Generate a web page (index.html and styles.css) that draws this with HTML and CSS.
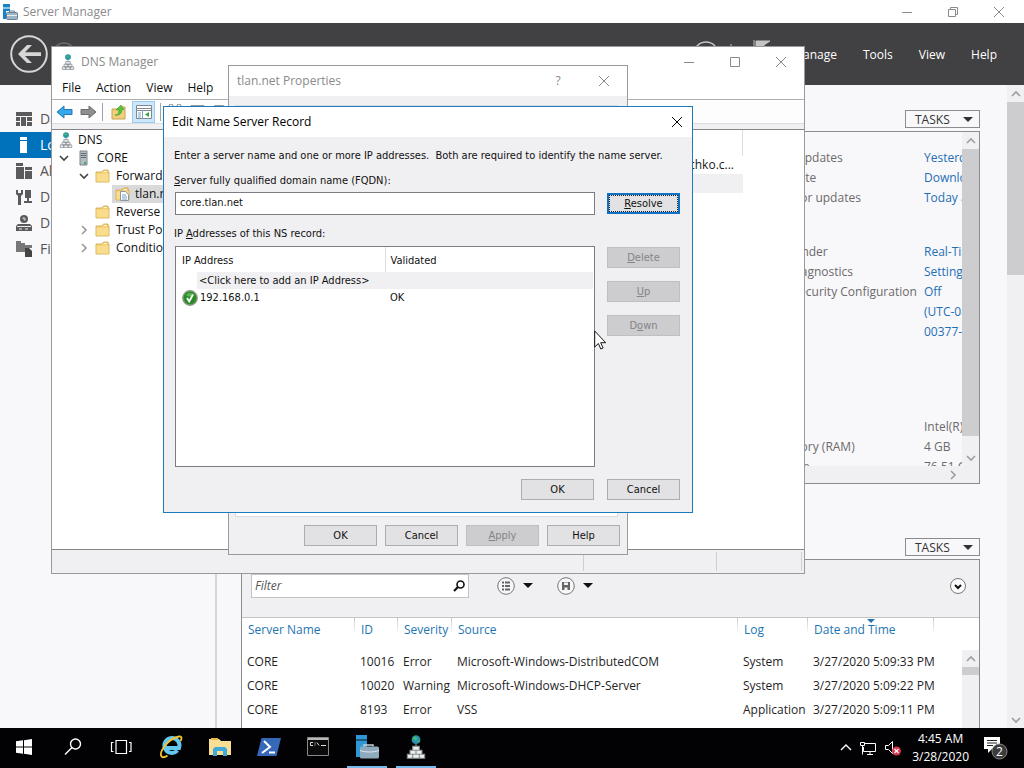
FILE: index.html
```html
<!DOCTYPE html>
<html lang="en">
<head>
<meta charset="utf-8">
<title>Server Manager</title>
<link rel="stylesheet" href="styles.css">
</head>
<body>
<svg class="defs" aria-hidden="true">
  <symbol id="x" viewBox="0 0 12 12"><path d="M1 1l10 10M11 1L1 11" fill="none" stroke="currentColor"/></symbol>
  <symbol id="min" viewBox="0 0 12 12"><path d="M1 6.500h10" fill="none" stroke="currentColor"/></symbol>
  <symbol id="down" viewBox="0 0 10 10"><path d="M1 3l4 4 4-4" fill="none" stroke="currentColor" stroke-width="1.600"/></symbol>
  <symbol id="tri" viewBox="0 0 10 6"><path d="M0 0h10L5 5z" fill="currentColor"/></symbol>
  <symbol id="dns" viewBox="0 0 14 18">
    <circle cx="7" cy="3.500" r="3.300" fill="#2e8fae"/><path d="M4.500 2.500l2-1.500 1.500 1.500-1 2zM8 4.500l2-.5-.8 2z" fill="#3fc06a"/>
    <path d="M7 7v2" fill="none" stroke="#8a8f94"/>
    <path d="M4.500 8.500h5v3h-5zM2.500 11.500h4.500v3H2.500zM7 11.500h4.500v3H7zM.5 14.500h4v3h-4zM4.500 14.500h5v3h-5zM9.500 14.500h4v3h-4z" fill="#eceef0" stroke="#858a90" stroke-width=".8"/>
  </symbol>
  <symbol id="folder" viewBox="0 0 15 14">
    <path d="M1 13V3h6l1.500-2H13v2h1v10z" fill="#f2cf73" stroke="#d2a544" stroke-width=".8"/><path d="M1.500 4.500h12v8h-12z" fill="#f9dd8d"/><path d="M8.500 2.500H12" stroke="#fff7dc"/>
  </symbol>
  <symbol id="srv" viewBox="0 0 24 24">
    <path d="M1 0h11v22H1z" fill="#2f97d6"/><path d="M1 5h11" stroke="#000" stroke-width=".8"/>
    <path d="M9 11.500V10h9v1.500" fill="none" stroke="#c8d3dd" stroke-width="1.500"/>
    <rect x="5" y="11.500" width="19" height="12" rx="1.500" fill="#8fa9bd"/><path d="M5 15.500c6 2 13 2 19 0" fill="none" stroke="#dfe8ef"/>
  </symbol>
</svg>
<div class="screen">
  <main class="sm">
    <header class="sm-title">
      <svg class="i16" viewBox="0 0 16 16"><path d="M1 0h7v15H1z" fill="#1883c4"/><path d="M1 4h7" stroke="#fff"/><path d="M4 7h12v9H4z" fill="#fff"/><path d="M7.500 8.500V7h5v1.500" fill="none" stroke="#667f94"/><rect x="4.500" y="8.500" width="11" height="7" rx="1" fill="#9eb3c3" stroke="#667f94"/><path d="M5 11.500h10" stroke="#e8eef3"/></svg>
      <h1 class="caption">Server Manager</h1>
      <div class="winbtns">
        <button aria-label="Minimize"><svg class="i12"><use href="#min"/></svg></button>
        <button aria-label="Restore"><svg class="i12" viewBox="0 0 12 12"><path d="M1.500 3.500h7v7h-7zM3.500 3V1.500h7v7H9" fill="none" stroke="currentColor"/></svg></button>
        <button aria-label="Close"><svg class="i12"><use href="#x"/></svg></button>
      </div>
    </header>
    <nav class="sm-bar">
      <button class="round" aria-label="Back"><svg viewBox="0 0 38 38"><circle cx="19" cy="19" r="17.800" fill="none" stroke="#d6d6d6" stroke-width="2"/><path d="M8 19l9-9h5l-7 7.300h16v3.600H15l7 7.100h-5z" fill="#d6d6d6"/></svg></button>
      <svg class="fwd" viewBox="0 0 24 24"><circle cx="12" cy="12" r="11" fill="none" stroke="#6a6a6a" stroke-width="1.500"/></svg>
      <svg class="refresh" viewBox="0 0 80 28"><circle cx="13" cy="14" r="12" fill="none" stroke="#c4c4c4" stroke-width="1.500"/><path d="M38 4v20" stroke="#bbb"/><path d="M61 0v26M63 1h14l-6 4v4h-8z" fill="#c4c4c4" stroke="#c4c4c4"/></svg>
      <div class="sm-menu"><button>Manage</button><button>Tools</button><button>View</button><button>Help</button></div>
    </nav>
    <div class="sm-body">
      <aside class="side">
        <a href="#" class="nav"><svg viewBox="0 0 16 16"><path d="M0 1h16v4H0zM0 6h4v4H0zM5 6h5v9H5zM11 6h5v4h-5zM0 11h4v4H0zM11 11h5v4h-5z" fill="#5b5b5d"/></svg>Dashboard</a>
        <a href="#" class="nav on"><svg viewBox="0 0 16 16"><path d="M4 0h7v3H4zM4 4h7v12H4z" fill="#fff"/></svg>Local Server</a>
        <a href="#" class="nav"><svg viewBox="0 0 16 16"><path d="M0 0h7v3H0zM0 4h8v12H0zM9 4h7v3H9zM9 8h7v8H9z" fill="#5b5b5d"/></svg>All Servers</a>
        <a href="#" class="nav"><svg viewBox="0 0 16 16"><path d="M0 1v4l2 2v9h3V7l2-2V1H5v3H2V1zM9 1h6v8H9zM11 9h2v3h3v2H8v-2h3z" fill="#5b5b5d"/></svg>DHCP</a>
        <a href="#" class="nav"><svg viewBox="0 0 16 16"><circle cx="8" cy="4" r="4" fill="#5b5b5d"/><path d="M6 3l2-1 2 2-1 2z" fill="#bbb"/><path d="M2 9h12l2 2v5H0v-5z" fill="#5b5b5d"/><path d="M1 11.500h14M3 14h3M9 14h3" stroke="#eee"/></svg>DNS</a>
        <a href="#" class="nav"><svg viewBox="0 0 16 16"><path d="M0 2V0h5v2h4v9H0zM9 4h7v3H9z" fill="#77777a"/><path d="M9 7h4l3 3v6H9z" fill="#444"/></svg>File and Storage Services</a>
      </aside>
      <section class="content">
        <div class="sec-head"><button class="tasks">TASKS<svg><use href="#tri"/></svg></button></div>
        <div class="props">
          <div class="props-view">
            <dl class="plist">
              <dt>Last installed updates</dt><dd><a href="#">Yesterday</a></dd>
              <dt>Windows Update</dt><dd><a href="#">Download</a></dd>
              <dt>Last checked for updates</dt><dd><a href="#">Today at</a></dd>
            </dl>
            <dl class="plist">
              <dt>Windows Defender</dt><dd><a href="#">Real-Time</a></dd>
              <dt>Feedback &amp; Diagnostics</dt><dd><a href="#">Settings</a></dd>
              <dt>IE Enhanced Security Configuration</dt><dd><a href="#">Off</a></dd>
              <dt>Time zone</dt><dd><a href="#">(UTC-08:00)</a></dd>
              <dt>Product ID</dt><dd><a href="#">00377-1</a></dd>
            </dl>
            <dl class="plist hw">
              <dt>Processors</dt><dd>Intel(R)</dd>
              <dt>Installed memory (RAM)</dt><dd>4 GB</dd>
              <dt>Total disk space</dt><dd>76.51 GB</dd>
            </dl>
          </div>
          <div class="vbar"><span class="cap"><svg class="up"><use href="#down"/></svg></span><span class="thumb"></span><span class="cap low"><svg><use href="#down"/></svg></span></div>
          <div class="hbar"><svg class="right"><use href="#down"/></svg></div>
        </div>
        <div class="sec-head second"><button class="tasks">TASKS<svg><use href="#tri"/></svg></button></div>
        <div class="events">
          <div class="ev-tools">
            <label class="filter"><input type="text" placeholder="Filter" aria-label="Filter"><svg viewBox="0 0 12 12"><circle cx="7.500" cy="4.500" r="3.500" fill="none" stroke="#111" stroke-width="1.600"/><path d="M5 7L1 11" stroke="#111" stroke-width="2.200"/></svg></label>
            <button class="opt" aria-label="Queries"><svg class="i18" viewBox="0 0 18 18"><circle cx="9" cy="9" r="8.300" fill="#f7f6f8" stroke="#777"/><path d="M5 5.500h2M5 9h2M5 12.500h2M8 5.500h5M8 9h5M8 12.500h5" stroke="#666" stroke-width="2"/></svg><svg class="tri"><use href="#tri"/></svg></button>
            <button class="opt" aria-label="Save"><svg class="i18" viewBox="0 0 18 18"><circle cx="9" cy="9" r="8.300" fill="#f7f6f8" stroke="#777"/><path d="M5 5h8v8H5z" fill="#666"/><path d="M7 5.500h4v2.500H7zM7.500 10.500h3V13h-3z" fill="#f3f3f3"/></svg><svg class="tri"><use href="#tri"/></svg></button>
            <button class="expand" aria-label="Expand"><svg class="i18" viewBox="0 0 18 18"><circle cx="9" cy="9" r="7.500" fill="#fbfbfc" stroke="#777"/><path d="M6 8l3 3 3-3" fill="none" stroke="#111" stroke-width="2"/></svg></button>
          </div>
          <div class="ev-grid">
            <table class="ev">
              <colgroup><col class="c1"><col class="c2"><col class="c3"><col class="c4"><col class="c5"><col class="c6"><col></colgroup>
              <thead><tr><th>Server Name</th><th>ID</th><th>Severity</th><th>Source</th><th>Log</th><th class="sorted">Date and Time<svg><use href="#tri"/></svg></th><th></th></tr></thead>
              <tbody>
                <tr><td>CORE</td><td>10016</td><td>Error</td><td>Microsoft-Windows-DistributedCOM</td><td>System</td><td>3/27/2020 5:09:33 PM</td><td></td></tr>
                <tr><td>CORE</td><td>10020</td><td>Warning</td><td>Microsoft-Windows-DHCP-Server</td><td>System</td><td>3/27/2020 5:09:22 PM</td><td></td></tr>
                <tr><td>CORE</td><td>8193</td><td>Error</td><td>VSS</td><td>Application</td><td>3/27/2020 5:09:11 PM</td><td></td></tr>
              </tbody>
            </table>
            <div class="vbar ev-scroll"><span class="cap"><svg class="up"><use href="#down"/></svg></span><span class="thumb short"></span></div>
          </div>
        </div>
      </section>
      <div class="pagebar"><span class="cap"><svg class="up"><use href="#down"/></svg></span><span class="thumb page"></span><span class="cap last"><svg><use href="#down"/></svg></span></div>
    </div>
  </main>

  <section class="win dns">
    <header class="dns-title"><svg class="dnsic"><use href="#dns"/></svg><h2 class="caption">DNS Manager</h2>
      <div class="winbtns"><button aria-label="Minimize"><svg class="i12"><use href="#min"/></svg></button><button aria-label="Maximize"><svg class="i12" viewBox="0 0 12 12"><path d="M1.500 1.500h9v9h-9z" fill="none" stroke="currentColor"/></svg></button><button aria-label="Close"><svg class="i12"><use href="#x"/></svg></button></div>
    </header>
    <nav class="dns-menu"><button>File</button><button>Action</button><button>View</button><button>Help</button></nav>
    <div class="dns-tools">
      <button aria-label="Back"><svg viewBox="0 0 18 16"><path d="M1 8l7-6v3.500h8v5H8V14z" fill="#35a8e8" stroke="#2379b8"/></svg></button>
      <button aria-label="Forward"><svg viewBox="0 0 18 16"><path d="M17 8l-7-6v3.500H2v5h8V14z" fill="#8f8f8f" stroke="#6d6d6d"/></svg></button>
      <span class="rule"></span>
      <button aria-label="Up"><svg viewBox="0 0 18 16"><path d="M2 15V5h6l2-2h5v12z" fill="#f0cf7c" stroke="#c9a24c"/><path d="M5 11c3 0 4-2 4-5H6l5-5 3 4.500h-2c0 4-3 6.500-7 5.500z" fill="#55c43a" stroke="#3d9a28" stroke-width=".6"/></svg></button>
      <button class="on" aria-label="Console tree"><svg viewBox="0 0 18 16"><path d="M1.500 1.500h15v13h-15z" fill="#fff" stroke="#808890"/><path d="M1 4.500h16M1 6.500h16" stroke="#808890"/><path d="M7.500 6v9M3 9h3M3 11h3M3 13h3" stroke="#80a0c0"/><path d="M14 8v5l-4-2.500z" fill="#33a933"/></svg></button>
      <span class="rule"></span>
      <button aria-label="Cut and properties" class="wide"><svg viewBox="0 0 64 16"><circle cx="4" cy="2" r="2" fill="none" stroke="#888"/><circle cx="12" cy="2" r="2" fill="none" stroke="#888"/><path d="M24 1.500h13V8H24zM47.500 1.500h9V8h-9z" fill="#fff" stroke="#999"/></svg></button>
    </div>
    <div class="panes">
      <ul class="tree">
        <li class="l0"><svg class="dnsic"><use href="#dns"/></svg><span>DNS</span></li>
        <li class="l1"><svg class="chev"><use href="#down"/></svg><svg class="tower" viewBox="0 0 12 16"><path d="M3 1h7v14H3z" fill="#b4bcc3" stroke="#7d868e"/><path d="M4 3.500h5M4 5.500h5M4 7.500h5" stroke="#5f6972"/><path d="M7 12h2v2H7z" fill="#35b54a"/></svg><span>CORE</span></li>
        <li class="l2"><svg class="chev"><use href="#down"/></svg><svg class="fold"><use href="#folder"/></svg><span>Forward Lookup Zones</span></li>
        <li class="l3 sel"><svg class="fold" viewBox="0 0 15 14"><use href="#folder"/><path d="M5.500 4.500h5l3 3v6h-8z" fill="#fff" stroke="#8a98a5"/><path d="M7 8h4M7 10h5M7 12h5" stroke="#5588b8" stroke-width=".8"/></svg><span>tlan.net</span></li>
        <li class="l2"><i class="chev"></i><svg class="fold"><use href="#folder"/></svg><span>Reverse Lookup Zones</span></li>
        <li class="l2"><svg class="chev shut"><use href="#down"/></svg><svg class="fold"><use href="#folder"/></svg><span>Trust Points</span></li>
        <li class="l2"><svg class="chev shut"><use href="#down"/></svg><svg class="fold"><use href="#folder"/></svg><span>Conditional Forwarders</span></li>
      </ul>
      <div class="records"><div class="rec-head"></div><div class="rec">chko.c...</div><div class="rec alt"></div></div>
    </div>
    <footer class="status"><span></span><span class="s2"></span><span class="s3"></span></footer>
  </section>

  <section class="win sheet">
    <header class="sheet-title"><h2 class="caption">tlan.net Properties</h2><div class="winbtns"><button aria-label="Help">?</button><button aria-label="Close"><svg class="i12"><use href="#x"/></svg></button></div></header>
    <div class="sheet-body"><div class="tabpage"></div>
      <div class="row"><button class="btn">OK</button><button class="btn">Cancel</button><button class="btn" disabled><u>A</u>pply</button><button class="btn">Help</button></div>
    </div>
  </section>

  <section class="win dialog" role="dialog" aria-labelledby="dlg">
    <header class="dlg-title"><h2 class="caption" id="dlg">Edit Name Server Record</h2><div class="winbtns"><button aria-label="Close"><svg class="i12"><use href="#x"/></svg></button></div></header>
    <div class="dlg-body">
      <p class="intro">Enter a server name and one or more IP addresses.&nbsp; Both are required to identify the name server.</p>
      <label class="lab" for="fqdn"><u>S</u>erver fully qualified domain name (FQDN):</label>
      <div class="pair"><input class="fqdn" id="fqdn" type="text" value="core.tlan.net"><button class="btn primary"><span><u>R</u>esolve</span></button></div>
      <p class="lab ips">IP <u>A</u>ddresses of this NS record:</p>
      <div class="pair grow">
        <div class="list">
          <table>
            <thead><tr><th class="addr">IP Address</th><th>Validated</th></tr></thead>
            <tbody>
              <tr class="new"><td colspan="2"><span>&lt;Click here to add an IP Address&gt;</span></td></tr>
              <tr class="ip"><td><div><svg viewBox="0 0 16 16"><circle cx="8" cy="8" r="7.200" fill="#2a8a27" stroke="#8b9a88" stroke-width="1.400"/><path d="M4 5a5 5 0 0 1 8 0c-2 2-6 2-8 0z" fill="#5db653"/><path d="M5 8l2.200 3.500L11 4.500" fill="none" stroke="#fff" stroke-width="1.800"/></svg>192.168.0.1</div></td><td>OK</td></tr>
            </tbody>
          </table>
        </div>
        <div class="stack"><button class="btn" disabled><u>D</u>elete</button><button class="btn" disabled><u>U</u>p</button><button class="btn" disabled>D<u>o</u>wn</button></div>
      </div>
      <div class="row finish"><button class="btn">OK</button><button class="btn">Cancel</button></div>
    </div>
  </section>

  <footer class="taskbar">
    <button aria-label="Start"><svg viewBox="0 0 24 24"><path d="M4 6.300l7-1V11.500H4zM12 5.200l8-1.200v7.500h-8zM4 12.500h7v6.200l-7-1zM12 12.500h8V20l-8-1.200z" fill="#fff"/></svg></button>
    <button aria-label="Search"><svg viewBox="0 0 24 24"><circle cx="14.500" cy="9" r="5" fill="none" stroke="#fff" stroke-width="1.400"/><path d="M11 12.500l-7 7" stroke="#fff" stroke-width="1.400"/></svg></button>
    <button aria-label="Task view"><svg viewBox="0 0 24 24"><path d="M6 5.500h10.500v13H6zM3.500 7.500h-2v9h2M19 7.500h2v9h-2" fill="none" stroke="#fff" stroke-width="1.200"/></svg></button>
    <button aria-label="Internet Explorer"><svg viewBox="0 0 24 24"><path d="M18.500 15.500A7.500 7.500 0 1 1 20 13H7.500" fill="none" stroke="#62c8f2" stroke-width="4"/><path d="M3 22C-1 18 8 4 20 1.500c3-.5 3 2 1.500 4.500M3 22c1.500.6 3.500 0 5.500-1.500" fill="none" stroke="#f4c430" stroke-width="1.800"/></svg></button>
    <button aria-label="File Explorer"><svg viewBox="0 0 24 24"><path d="M1 20V4h10l2 2h10v14z" fill="#f9df94"/><path d="M3 3h7v2H3z" fill="#e8b84a"/><path d="M5 21v-7l2-2h10l2 2v7h-4v-5H9v5z" fill="#3fa9dc"/></svg></button>
    <button aria-label="PowerShell"><svg viewBox="0 0 24 24"><path d="M4.500 3H24l-4.500 18H0z" fill="#3568b8"/><path d="M7 6l6 6-8 6M12 17.500h6" fill="none" stroke="#fff" stroke-width="2"/></svg></button>
    <button aria-label="Command Prompt"><svg viewBox="0 0 24 24"><path d="M1.500 2.500h21v18h-21z" fill="#0b0b0b" stroke="#888"/><path d="M2 4h20" stroke="#b8b8b8" stroke-width="2"/><path d="M7 7.500H4.500v3H7M9 7.500v1M9 9.500v1M11 7.500l2 3M15 10.500h5" fill="none" stroke="#ddd"/></svg></button>
    <button aria-label="Server Manager" class="run"><svg viewBox="0 0 24 24"><use href="#srv"/></svg></button>
    <button aria-label="DNS Manager" class="run"><svg viewBox="0 0 24 24"><use href="#dns" width="24" height="24"/></svg></button>
    <div class="tray">
      <svg class="up" viewBox="0 0 12 12"><path d="M1 4l5 5 5-5" fill="none" stroke="#fff" stroke-width="1.400"/></svg>
      <svg viewBox="0 0 18 16"><path d="M5 3.500h11.500v8H4.500V7M8 14.500h6M11 11.500v3M1.500 2.500h4v3h-4zM3.500 5.500v9" fill="none" stroke="#fff"/></svg>
      <svg viewBox="0 0 18 16"><path d="M1.500 5.500h3l4-4v12l-4-4h-3z" fill="none" stroke="#fff"/><circle cx="12.500" cy="11" r="4.500" fill="#d8344a"/><path d="M10.500 9l4 4M14.500 9l-4 4" stroke="#fff" stroke-width="1.300"/></svg>
      <time class="clock">4:45 AM<br>3/28/2020</time>
      <svg class="note" viewBox="0 0 24 24"><path d="M0 1h16v12H8l-4 4v-4H0z" fill="#fff"/><path d="M3 4.500h10M3 7h10M3 9.500h6" stroke="#222"/><circle cx="15.500" cy="15.500" r="7.500" fill="#3b3b3b" stroke="#888"/><text x="15.500" y="20" text-anchor="middle" fill="#fff" class="badge">2</text></svg>
    </div>
  </footer>
  <svg class="cursor" viewBox="0 0 12 20"><path d="M.7 1v16l3.700-3.500 2.400 5.500 2.300-1-2.400-5.300h5z" fill="#fff" stroke="#000" stroke-width=".9"/></svg>
</div>
</body>
</html>
```
FILE: styles.css
```css
* { box-sizing: border-box; }
body { margin: 0; font: 12px/16px "Open Sans", "Noto Sans", sans-serif; color: #1a1a1a; }
button, input { font: inherit; color: inherit; margin: 0; }
button { padding: 0; border: 0; background: none; }
h1, h2, p, dl, dd, ul { margin: 0; padding: 0; }
a { color: #1e6fb5; text-decoration: none; }
svg { display: block; flex: none; }
.defs { position: absolute; width: 0; height: 0; }
.screen { position: relative; height: 100vh; display: flex; flex-direction: column; overflow: hidden; background: #f8f7fa; }
.caption { font-size: 12px; font-weight: 400; flex: 1; white-space: nowrap; }
.i12 { width: 12px; height: 12px; }
.i16 { width: 16px; height: 16px; }
.i18 { width: 18px; height: 18px; }
.winbtns { display: flex; }
.winbtns button { width: 46px; display: flex; justify-content: center; align-items: center; }
.up { transform: rotate(180deg); }
.right { transform: rotate(-90deg); }

/* Server Manager */
.sm { flex: 1; min-height: 0; display: flex; flex-direction: column; }
.sm-title { height: 23px; display: flex; align-items: center; gap: 5px; padding: 0 2px; background: #fff; color: #8a8a8a; }
.sm-bar { height: 62px; display: flex; align-items: center; padding: 0 16px 0 10px; background: #414042; color: #fff; }
.round, .round svg { width: 38px; height: 38px; }
.fwd { width: 24px; height: 24px; margin-left: 4px; }
.refresh { width: 80px; height: 28px; margin-left: auto; }
.sm-menu { display: flex; gap: 4px; margin-left: 8px; padding-top: 2px; }
.sm-menu button { padding: 0 11px; }
.sm-body { flex: 1; min-height: 0; display: flex; }
.side { width: 217px; padding-top: 21px; border-right: 2px solid #d4d3d6; }
.nav { display: flex; align-items: center; gap: 8px; height: 26px; padding-left: 16px; font-size: 14px; color: #555; white-space: nowrap; }
.nav svg { width: 16px; height: 16px; }
.nav.on { background: #0072bc; color: #fff; }
.content { flex: 1; min-width: 0; display: flex; flex-direction: column; padding: 25px 27px 0 24px; }
.sec-head { display: flex; justify-content: flex-end; padding-bottom: 3px; }
.second { margin-top: 54px; }
.tasks { display: flex; align-items: center; justify-content: space-between; width: 75px; height: 18px; padding: 1px 6px 0 9px; border: 1px solid #8c8b8e; color: #333; }
.tasks svg { width: 10px; height: 6px; }
.props { height: 353px; display: grid; grid-template: 1fr 17px / 1fr 17px; border: 1px solid #8c8b8e; }
.props-view { overflow: hidden; padding: 16px 0 0 479px; color: #6b6b6b; }
.plist { display: grid; grid-template-columns: 203px 200px; grid-auto-rows: 20px; line-height: 20px; white-space: nowrap; margin-bottom: 34px; }
.hw { margin-top: 75px; margin-bottom: 0; }
.vbar, .pagebar { display: flex; flex-direction: column; background: #f0eff1; color: #8a8a8a; }
.cap { height: 17px; display: flex; align-items: center; justify-content: center; }
.cap svg, .right { width: 10px; height: 10px; opacity: .8; }
.thumb { flex: 1; background: #cdccce; }
.cap.low { height: 30px; align-items: flex-end; padding-bottom: 3px; }
.hbar { grid-column: 1 / 3; display: flex; align-items: center; justify-content: flex-end; padding-right: 21px; background: #f0eff1; color: #8a8a8a; }
.pagebar { width: 17px; }
.thumb.page { flex: none; height: 173px; }
.cap.last { margin-top: auto; }
.events { flex: 1; min-height: 0; display: flex; flex-direction: column; border: 1px solid #8c8b8e; border-bottom: 0; background: #fff; }
.ev-tools { height: 58px; flex: none; display: flex; align-items: flex-start; padding: 14px 12px 0 9px; background: #f0eff1; border-bottom: 1px solid #c4c3c6; }
.filter { display: flex; align-items: center; width: 218px; height: 24px; padding: 0 3px; background: #fff; border: 1px solid #c4c3c6; }
.filter input { flex: 1; min-width: 0; border: 0; padding: 0; background: none; font-style: italic; outline: none; }
.filter input::placeholder { color: #555; opacity: 1; }
.filter svg { width: 12px; height: 12px; }
.opt { display: flex; align-items: center; gap: 8px; width: 40px; height: 24px; margin-left: 28px; }
.opt + .opt { margin-left: 20px; }
.tri { width: 10px; height: 6px; color: #111; }
.expand { margin: 3px 0 0 auto; }
.ev-grid { flex: 1; min-height: 0; display: flex; position: relative; }
.ev { flex: 1; width: 100%; align-self: flex-start; border-collapse: collapse; table-layout: fixed; white-space: nowrap; }
.ev th { height: 32px; padding: 0 0 8px 6px; font-weight: 400; text-align: left; color: #1e75b3; background: linear-gradient(#c9c8cb, #fff) right top / 1px 16px no-repeat; }
.ev th:last-child { background: none; }
.ev td { height: 24px; padding: 0 0 0 5px; color: #1f1f1f; }
.sorted { position: relative; }
.sorted svg { position: absolute; top: 1px; left: 59px; width: 8px; height: 5px; }
.c1 { width: 113px; } .c2 { width: 43px; } .c3 { width: 54px; } .c4 { width: 286px; } .c5 { width: 70px; } .c6 { width: 126px; }
.ev-scroll { width: 17px; margin-top: 32px; }
.thumb.short { flex: none; height: 8px; }

/* Windows on the desktop */
.win { position: absolute; display: flex; flex-direction: column; border: 1px solid #9a999c; background: #f0eff1; }
.dns { left: 51px; top: 46px; width: 754px; height: 528px; }
.dns-title { height: 29px; display: flex; align-items: center; gap: 6px; padding-left: 9px; background: #fff; color: #8a8a8a; }
.dnsic { width: 14px; height: 16px; }
.dns-menu { height: 24px; display: flex; align-items: center; gap: 15px; padding-left: 10px; background: #fff; border-bottom: 1px solid #b0afb2; color: #111; }
.dns-tools { height: 24px; display: flex; align-items: center; padding-left: 3px; gap: 4px; background: #fdfdfe; border-bottom: 1px solid #dcdbde; }
.dns-tools button { width: 19px; height: 22px; display: flex; align-items: center; justify-content: center; }
.dns-tools svg { width: 18px; height: 16px; }
.dns-tools .on { width: 23px; background: #cce6fa; border: 1px solid #99cdf3; }
.dns-tools .wide, .dns-tools .wide svg { width: 64px; }
.rule { width: 1px; height: 18px; margin: 0 2px 0 1px; background: #a3a2a5; }
.panes { flex: 1; min-height: 0; margin-top: 5px; display: flex; background: #fff; border-top: 1px solid #858487; border-bottom: 1px solid #858487; }
.tree { width: 240px; list-style: none; color: #111; padding-top: 1px; }
.tree li { display: flex; align-items: center; gap: 5px; height: 18px; white-space: nowrap; }
.tree .l0 { padding-left: 7px; }
.tree .l1 { padding-left: 7px; gap: 6px; }
.tree .l2 { padding-left: 27px; gap: 6px; }
.tree .l3 { margin-left: 60px; padding-left: 3px; }
.sel { background: #d9d9d9; }
.chev { width: 10px; height: 10px; color: #444; }
.chev.shut { transform: rotate(-90deg); color: #999; }
.tower { width: 16px; height: 16px; }
.fold { width: 15px; height: 14px; }
.records { flex: 1; margin-right: 61px; text-align: right; }
.rec-head { height: 26px; border-right: 1px solid #dcdbde; }
.rec { height: 18px; line-height: 18px; padding-right: 9px; }
.rec.alt { height: 19px; background: #f0eff1; }
.status { height: 23px; display: flex; padding: 2px 2px 2px 0; }
.status span { flex: 1; border-right: 1px solid #cfced1; }
.status .s2 { flex: none; width: 133px; }
.status .s3 { flex: none; width: 85px; }

.sheet { left: 228px; top: 65px; width: 400px; height: 490px; }
.sheet-title { height: 30px; display: flex; padding-left: 8px; align-items: center; background: #fff; color: #8a8a8a; }
.sheet-body { flex: 1; display: flex; flex-direction: column; padding: 9px 7px 8px 6px; }
.tabpage { flex: 1; background: #fff; border: 1px solid #dcdbde; margin-right: 2px; margin-bottom: 8px; }
.row { display: flex; justify-content: flex-end; gap: 8px; }

.dialog { left: 163px; top: 106px; width: 530px; height: 407px; border-color: #1e7abf; color: #111; }
.dlg-title { height: 30px; display: flex; align-items: center; padding-left: 8px; background: #fff; color: #000; }
.dlg-title .winbtns button { width: 30px; }
.dlg-body { flex: 1; min-height: 0; display: flex; flex-direction: column; padding: 11px 12px 12px 10px; }
.dlg-body, .row { font: 11px/16px "DejaVu Sans Condensed", "DejaVu Sans", sans-serif; }
.intro, .lab { white-space: nowrap; }
.intro { margin-bottom: 9px; }
.lab { display: block; margin-bottom: 3px; }
.ips { margin-top: 11px; margin-bottom: 4px; }
.pair { display: flex; gap: 12px; align-items: center; padding-left: 1px; }
.fqdn { flex: 1; min-width: 0; height: 23px; padding: 0 4px 3px; border: 1px solid #7d7c80; background: #fff; }
.btn { width: 73px; height: 21px; padding-top: 1px; border: 1px solid #adacaf; background: #e2e1e3; color: #111; }
.btn:disabled { background: #cdccce; border-color: #bfbec1; color: #858487; }
.primary { padding: 0; border: 2px solid #0f70c4; }
.primary span { display: block; border: 1px dotted #222; line-height: 15px; }
.grow { flex: 1; min-height: 0; align-items: stretch; }
.list { flex: 1; border: 1px solid #7d7c80; background: #fff; padding: 0 1px; }
.list table { width: 100%; border-collapse: collapse; table-layout: fixed; }
.list th { height: 25px; padding: 2px 0 0 5px; font-weight: 400; text-align: left; }
.list .addr { width: 208px; border-right: 1px solid #dcdbde; }
.list td { height: 17px; padding: 0 0 0 5px; }
.list .new td { padding-left: 20px; }
.new span { display: block; background: #f0eff1; padding-left: 2px; line-height: 17px; }
.ip div { display: flex; align-items: center; gap: 2px; }
.ip svg { width: 16px; height: 16px; }
.stack { display: flex; flex-direction: column; gap: 13px; padding-top: 1px; }
.finish { gap: 13px; margin-top: 12px; }

/* Taskbar */
.taskbar { position: relative; z-index: 1; height: 40px; flex: none; display: flex; background: #020204; color: #fff; }
.taskbar button { width: 49px; border-bottom: 2px solid transparent; display: flex; align-items: center; justify-content: center; }
.taskbar button:first-child { width: 48px; }
.taskbar button svg { width: 24px; height: 24px; }
.taskbar .run { width: 40px; margin: 0 4px 0 5px; border-color: #76b9ed; }
.tray { margin-left: auto; display: flex; align-items: center; gap: 7px; padding-right: 16px; }
.tray svg { width: 18px; height: 16px; }
.tray .up { width: 12px; height: 12px; }
.clock { text-align: center; line-height: 18px; margin: 0 8px 0 3px; }
.tray .note { width: 24px; height: 24px; }
.badge { font-size: 12px; }
.cursor { position: absolute; z-index: 2; left: 594px; top: 330px; width: 12px; height: 20px; }
```
